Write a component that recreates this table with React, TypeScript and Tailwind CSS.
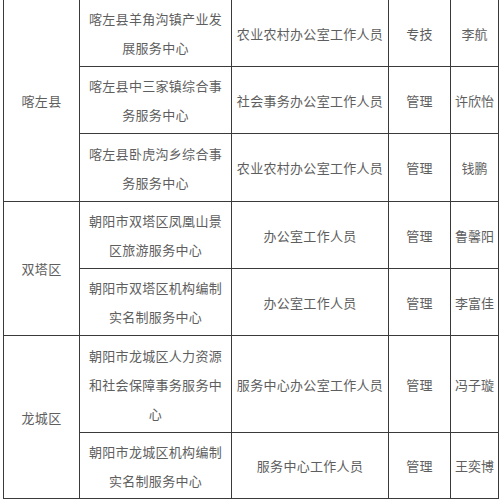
import React from "react";

type Row = {
  county?: string;
  span?: number;
  unit: string[];
  post: string;
  kind: string;
  name: string;
  h: string;
};

const rows: Row[] = [
  { county: "喀左县", span: 3, unit: ["喀左县羊角沟镇产业发", "展服务中心"], post: "农业农村办公室工作人员", kind: "专技", name: "李航", h: "h-[67px]" },
  { unit: ["喀左县中三家镇综合事", "务服务中心"], post: "社会事务办公室工作人员", kind: "管理", name: "许欣怡", h: "h-[67px]" },
  { unit: ["喀左县卧虎沟乡综合事", "务服务中心"], post: "农业农村办公室工作人员", kind: "管理", name: "钱鹏", h: "h-[68px]" },
  { county: "双塔区", span: 2, unit: ["朝阳市双塔区凤凰山景", "区旅游服务中心"], post: "办公室工作人员", kind: "管理", name: "鲁馨阳", h: "h-[67px]" },
  { unit: ["朝阳市双塔区机构编制", "实名制服务中心"], post: "办公室工作人员", kind: "管理", name: "李富佳", h: "h-[67px]" },
  { county: "龙城区", span: 2, unit: ["朝阳市龙城区人力资源", "和社会保障事务服务中", "心"], post: "服务中心办公室工作人员", kind: "管理", name: "冯子璇", h: "h-[97px]" },
  { unit: ["朝阳市龙城区机构编制", "实名制服务中心"], post: "服务中心工作人员", kind: "管理", name: "王奕博", h: "h-[66px]" },
];

const cell = "border border-[#3a3a3a] text-center align-middle p-0";

export default function App() {
  return (
    <div className="w-[500px] h-[500px] overflow-hidden bg-white">
      <table
        className="table-fixed border-collapse ml-[3px] -mt-[1px] w-[496px] text-[13px] leading-[29px] tracking-[0.3px] text-[#5e5e5e]"
        style={{ fontFamily: '"Noto Sans CJK SC", "Noto Sans", sans-serif' }}
      >
        <colgroup>
          <col className="w-[76px]" />
          <col className="w-[152px]" />
          <col className="w-[157px]" />
          <col className="w-[62px]" />
          <col className="w-[48px]" />
        </colgroup>
        <tbody>
          {rows.map((r, i) => (
            <tr key={i} className={r.h}>
              {r.county && (
                <td rowSpan={r.span} className={cell}>
                  {r.county}
                </td>
              )}
              <td className={cell}>
                {r.unit.map((l, j) => (
                  <div key={j}>{l}</div>
                ))}
              </td>
              <td className={cell}>{r.post}</td>
              <td className={cell}>{r.kind}</td>
              <td className={`${cell} whitespace-nowrap tracking-normal`}>{r.name}</td>
            </tr>
          ))}
        </tbody>
      </table>
    </div>
  );
}
